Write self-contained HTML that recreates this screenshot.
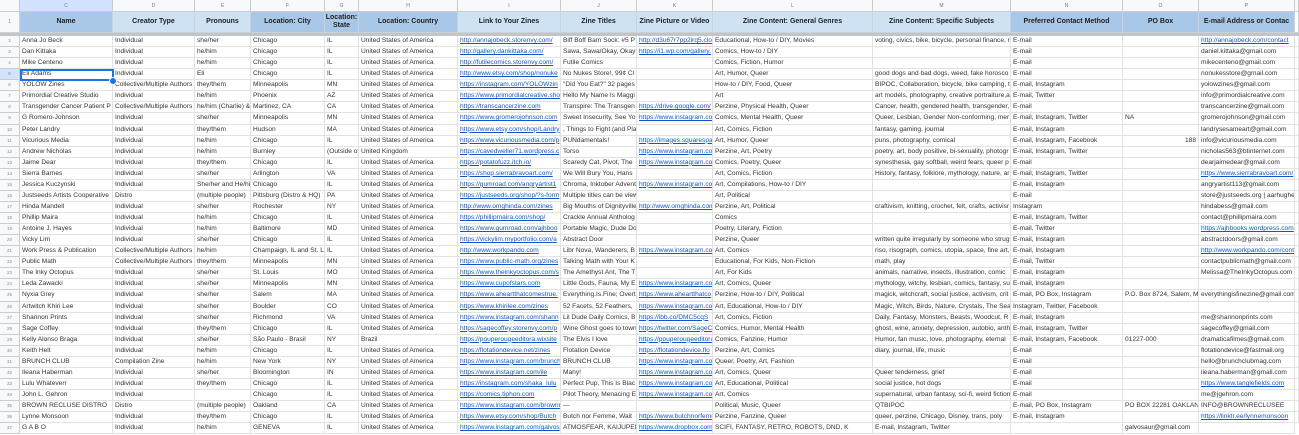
<!DOCTYPE html>
<html><head><meta charset="utf-8"><style>
*{margin:0;padding:0;box-sizing:border-box}
body{width:1299px;height:435px;overflow:hidden;background:#fff;font-family:"Liberation Sans",Arial,sans-serif;position:relative}
.g{display:grid;grid-template-columns:20px 93px 82px 56px 74px 34px 99px 103px 76px 76px 160px 138px 112px 76px 96px 4px}
.g>span{border-right:1px solid #e2e2e2;border-bottom:1px solid #e2e2e2;overflow:hidden;white-space:nowrap;padding-left:2px}
.lt{height:12px;background:#f8f9fa}
.lt>span{font-size:5px;color:#777;text-align:center;line-height:12px;border-color:#ccc;padding:0}
.hd{height:21px}
.hd>span{font-size:7px;font-weight:bold;color:#222;text-align:center;display:flex;align-items:center;justify-content:center;white-space:normal;line-height:8px;padding:0;border-color:#c8d3de}
.d{background:#a9c7e6}.li{background:#cfe2f3}
.sep{height:3px;background:#c4c4c4}
.r{height:11.07px}
.r>span{font-size:6.6px;color:#333;line-height:10.5px}
.r>span:first-child{font-size:4.5px;color:#888;text-align:center;padding:0;background:#f8f9fa;border-color:#ccc}
a{color:#1155cc;text-decoration:underline}
.rt{text-align:right;padding-right:2px}
#sel{position:absolute;left:20px;top:69px;width:94px;height:12px;border:2px solid #1a73e8}
#dot{position:absolute;left:109px;top:77px;width:8px;height:8px;border-radius:50%;background:#1a73e8;border:1px solid #fff}
</style></head><body>
<div class="g lt"><span style="background:#f8f9fa"></span><span style="background:#d3e3fd">C</span><span>D</span><span>E</span><span>F</span><span>G</span><span>H</span><span>I</span><span>J</span><span>K</span><span>L</span><span>M</span><span>N</span><span>O</span><span>P</span><span></span></div>
<div class="g hd"><span style="background:#f8f9fa;font-size:5px;font-weight:normal;color:#888">1</span><span class="d">Name</span><span class="li">Creator Type</span><span class="li">Pronouns</span><span class="d">Location: City</span><span class="d">Location: State</span><span class="d">Location: Country</span><span class="li">Link to Your Zines</span><span class="li">Zine Titles</span><span class="li">Zine Picture or Video</span><span class="li">Zine Content: General Genres</span><span class="li">Zine Content: Specific Subjects</span><span class="d">Preferred Contact Method</span><span class="d">PO Box</span><span class="d">E-mail Address or Contac</span><span></span></div>
<div class="sep"></div>
<div class="g r"><span>2</span><span>Anna Jo Beck</span><span>Individual</span><span>she/her</span><span>Chicago</span><span>IL</span><span>United States of America</span><span><a>http://annajobeck.storenvy.com/</a></span><span>Biff Boff Bam Sock: #5 P</span><span><a>http://d3u67r7pp2lrq5.clo</a></span><span>Educational, How-to / DIY, Movies</span><span>voting, civics, bike, bicycle, personal finance, r</span><span>E-mail</span><span></span><span><a>http://annajobeck.com/contact</a></span><span></span></div>
<div class="g r"><span>3</span><span>Dan Kittaka</span><span>Individual</span><span>he/him</span><span>Chicago</span><span>IL</span><span>United States of America</span><span><a>http://gallery.dankittaka.com/</a></span><span>Sawa, Sawa/Okay, Okay</span><span><a>https://i1.wp.com/gallery.</a></span><span>Comics, How-to / DIY</span><span></span><span>E-mail</span><span></span><span>daniel.kittaka@gmail.com</span><span></span></div>
<div class="g r"><span>4</span><span>Mike Centeno</span><span>Individual</span><span>he/him</span><span>Chicago</span><span>IL</span><span>United States of America</span><span><a>http://futilecomics.storenvy.com/</a></span><span>Futile Comics</span><span></span><span>Comics, Fiction, Humor</span><span></span><span>E-mail</span><span></span><span>mikecenteno@gmail.com</span><span></span></div>
<div class="g r"><span style="background:#d3e3fd">5</span><span>Eli Adams</span><span>Individual</span><span>Eli</span><span>Chicago</span><span>IL</span><span>United States of America</span><span><a>http://www.etsy.com/shop/nonuke</a></span><span>No Nukes Store!, 99¢ Cl</span><span></span><span>Art, Humor, Queer</span><span>good dogs and bad dogs, weed, fake horosco</span><span>E-mail</span><span></span><span>nonukesstore@gmail.com</span><span></span></div>
<div class="g r"><span>6</span><span>YOLOW Zines</span><span>Collective/Multiple Authors</span><span>they/them</span><span>Minneapolis</span><span>MN</span><span>United States of America</span><span><a>https://instagram.com/YOLOWzin</a></span><span>"Did You Eat?" 32 pages</span><span></span><span>How-to / DIY, Food, Queer</span><span>BIPOC, Collaboration, bicycle, bike camping, t</span><span>E-mail, Instagram</span><span></span><span>yolowzines@gmail.com</span><span></span></div>
<div class="g r"><span>7</span><span>Primordial Creative Studio</span><span>Individual</span><span>he/him</span><span>Phoenix</span><span>AZ</span><span>United States of America</span><span><a>https://www.primordialcreative.sho</a></span><span>Hello My Name Is Maggi</span><span></span><span>Art</span><span>art models, photography, creative portraiture,a</span><span>E-mail, Twitter</span><span></span><span>info@primordialcreative.com</span><span></span></div>
<div class="g r"><span>8</span><span>Transgender Cancer Patient P</span><span>Collective/Multiple Authors</span><span>he/him (Charlie) &amp;</span><span>Martinez, CA</span><span>CA</span><span>United States of America</span><span><a>https://transcancerzine.com</a></span><span>Transpire: The Transgen</span><span><a>https://drive.google.com/</a></span><span>Perzine, Physical Health, Queer</span><span>Cancer, health, gendered health, transgender,</span><span>E-mail</span><span></span><span>transcancerzine@gmail.com</span><span></span></div>
<div class="g r"><span>9</span><span>G Romero-Johnson</span><span>Individual</span><span>she/her</span><span>Minneapolis</span><span>MN</span><span>United States of America</span><span><a>https://www.gromerojohnson.com</a></span><span>Sweet Insecurity, See Yo</span><span><a>https://www.instagram.co</a></span><span>Comics, Mental Health, Queer</span><span>Queer, Lesbian, Gender Non-conforming, mer</span><span>E-mail, Instagram, Twitter</span><span>NA</span><span>gromerojohnson@gmail.com</span><span></span></div>
<div class="g r"><span>10</span><span>Peter Landry</span><span>Individual</span><span>they/them</span><span>Hudson</span><span>MA</span><span>United States of America</span><span><a>https://www.etsy.com/shop/Landry</a></span><span>, Things to Fight (and Pla</span><span></span><span>Art, Comics, Fiction</span><span>fantasy, gaming, journal</span><span>E-mail, Instagram</span><span></span><span>landrysesameart@gmail.com</span><span></span></div>
<div class="g r"><span>11</span><span>Vicurious Media</span><span>Individual</span><span>he/him</span><span>Chicago</span><span>IL</span><span>United States of America</span><span><a>https://www.vicuriousmedia.com/p</a></span><span>PUNdamentals!</span><span><a>https://images.squarespa</a></span><span>Art, Humor, Queer</span><span>puns, photography, comical</span><span>E-mail, Instagram, Facebook</span><span class="rt">188</span><span>info@vicuriousmedia.com</span><span></span></div>
<div class="g r"><span>12</span><span>Andrew Nicholas</span><span>Individual</span><span>he/him</span><span>Burnley</span><span>(Outside of</span><span>United Kingdom</span><span><a>https://cavedweller71.wordpress.c</a></span><span>Torso</span><span><a>https://www.instagram.co</a></span><span>Perzine, Art, Poetry</span><span>poetry, art, body positive, bi-sexuality, photogr</span><span>E-mail, Instagram, Twitter</span><span></span><span>nicholas563@btinternet.com</span><span></span></div>
<div class="g r"><span>13</span><span>Jaime Dear</span><span>Individual</span><span>they/them</span><span>Chicago</span><span>IL</span><span>United States of America</span><span><a>https://potatofuzz.itch.io/</a></span><span>Scaredy Cat, Pivot, The</span><span><a>https://www.instagram.co</a></span><span>Comics, Poetry, Queer</span><span>synesthesia, gay softball, weird fears, queer p</span><span>E-mail</span><span></span><span>dearjaimedear@gmail.com</span><span></span></div>
<div class="g r"><span>14</span><span>Sierra Barnes</span><span>Individual</span><span>she/her</span><span>Arlington</span><span>VA</span><span>United States of America</span><span><a>https://shop.sierrabravoart.com/</a></span><span>We Will Bury You, Hans</span><span></span><span>Art, Comics, Fiction</span><span>History, fantasy, folklore, mythology, nature, ar</span><span>E-mail, Instagram, Twitter</span><span></span><span><a>https://www.sierrabravoart.com/</a></span><span></span></div>
<div class="g r"><span>15</span><span>Jessica Kuczynski</span><span>Individual</span><span>She/her and He/hi</span><span>Chicago</span><span>IL</span><span>United States of America</span><span><a>https://gumroad.com/angryartist1</a></span><span>Chroma, Inktober Advent</span><span><a>https://www.instagram.co</a></span><span>Art, Compilations, How-to / DIY</span><span></span><span>E-mail, Instagram</span><span></span><span>angryartist113@gmail.com</span><span></span></div>
<div class="g r"><span>16</span><span>Justseeds Artists Cooperative</span><span>Distro</span><span>(multiple people)</span><span>Pittsburg (Distro &amp; HQ)</span><span>PA</span><span>United States of America</span><span><a>https://justseeds.org/shop/?s-form</a></span><span>Multiple titles can be view</span><span></span><span>Art, Political</span><span></span><span>E-mail</span><span></span><span>store@justseeds.org | aarhughe</span><span></span></div>
<div class="g r"><span>17</span><span>Hinda Mandell</span><span>Individual</span><span>she/her</span><span>Rochester</span><span>NY</span><span>United States of America</span><span><a>http://www.omghinda.com/zines</a></span><span>Big Mouths of Dignityville</span><span><a>http://www.omghinda.com</a></span><span>Perzine, Art, Political</span><span>craftivism, knitting, crochet, felt, crafts, activisr</span><span>Instagram</span><span></span><span>hindabess@gmail.com</span><span></span></div>
<div class="g r"><span>18</span><span>Phillip Maira</span><span>Individual</span><span>he/him</span><span>Chicago</span><span>IL</span><span>United States of America</span><span><a>https://phillipmaira.com/shop/</a></span><span>Crackle Annual Antholog</span><span></span><span>Comics</span><span></span><span>E-mail, Instagram, Twitter</span><span></span><span>contact@phillipmaira.com</span><span></span></div>
<div class="g r"><span>19</span><span>Antoine J. Hayes</span><span>Individual</span><span>he/him</span><span>Baltimore</span><span>MD</span><span>United States of America</span><span><a>https://www.gumroad.com/ajhboo</a></span><span>Portable Magic, Dude Do</span><span></span><span>Poetry, Literary, Fiction</span><span></span><span>E-mail, Twitter</span><span></span><span><a>https://ajhbooks.wordpress.com</a></span><span></span></div>
<div class="g r"><span>20</span><span>Vicky Lim</span><span>Individual</span><span>she/her</span><span>Chicago</span><span>IL</span><span>United States of America</span><span><a>https://vickylim.myportfolio.com/a</a></span><span>Abstract Door</span><span></span><span>Perzine, Queer</span><span>written quite irregularly by someone who strug</span><span>E-mail, Instagram</span><span></span><span>abstractdoors@gmail.com</span><span></span></div>
<div class="g r"><span>21</span><span>Work Press &amp; Publication</span><span>Collective/Multiple Authors</span><span>he/him</span><span>Champaign, IL and St. L</span><span>IL</span><span>United States of America</span><span><a>http://www.workpando.com</a></span><span>Libr Nova, Wanderers, B</span><span><a>https://www.instagram.co</a></span><span>Art, Comics</span><span>riso, risograph, comics, utopia, space, fine art,</span><span>E-mail, Instagram</span><span></span><span><a>http://www.workpando.com/cont</a></span><span></span></div>
<div class="g r"><span>22</span><span>Public Math</span><span>Collective/Multiple Authors</span><span>they/them</span><span>Minneapolis</span><span>MN</span><span>United States of America</span><span><a>https://www.public-math.org/zines</a></span><span>Talking Math with Your K</span><span></span><span>Educational, For Kids, Non-Fiction</span><span>math, play</span><span>E-mail, Twitter</span><span></span><span>contactpublicmath@gmail.com</span><span></span></div>
<div class="g r"><span>23</span><span>The Inky Octopus</span><span>Individual</span><span>she/her</span><span>St. Louis</span><span>MO</span><span>United States of America</span><span><a>https://www.theinkyoctopus.com/s</a></span><span>The Amethyst Ant, The T</span><span></span><span>Art, For Kids</span><span>animals, narrative, insects, illustration, comic</span><span>E-mail, Instagram</span><span></span><span>Melissa@TheInkyOctopus.com</span><span></span></div>
<div class="g r"><span>24</span><span>Leda Zawacki</span><span>Individual</span><span>she/her</span><span>Minneapolis</span><span>MN</span><span>United States of America</span><span><a>https://www.cupofstars.com</a></span><span>Little Gods, Fauna, My E</span><span><a>https://www.instagram.co</a></span><span>Art, Comics, Queer</span><span>mythology, witchy, lesbian, comics, fantasy, su</span><span>E-mail, Instagram</span><span></span><span></span><span></span></div>
<div class="g r"><span>25</span><span>Nyxia Grey</span><span>Individual</span><span>she/her</span><span>Salem</span><span>MA</span><span>United States of America</span><span><a>https://www.aheartthatcomestrue.</a></span><span>Everything.Is.Fine; Overt</span><span><a>https://www.aheartthatco</a></span><span>Perzine, How-to / DIY, Political</span><span>magick, witchcraft, social justice, activism, crit</span><span>E-mail, PO Box, Instagram</span><span>P.O. Box 8724, Salem, M</span><span>everythingisfinezine@gmail.com</span><span></span></div>
<div class="g r"><span>26</span><span>Artwitch Khiri Lee</span><span>Individual</span><span>she/her</span><span>Boulder</span><span>CO</span><span>United States of America</span><span><a>https://www.khirilee.com/zines</a></span><span>52 Facets, 52 Feathers,</span><span><a>https://www.instagram.co</a></span><span>Art, Educational, How-to / DIY</span><span>Magic, Witch, Birds, Nature, Crystals, The Sea</span><span>Instagram, Twitter, Facebook</span><span></span><span></span><span></span></div>
<div class="g r"><span>27</span><span>Shannon Prints</span><span>Individual</span><span>she/her</span><span>Richmond</span><span>VA</span><span>United States of America</span><span><a>https://www.instagram.com/shann</a></span><span>Lil Dude Daily Comics, B</span><span><a>https://ibb.co/DMC5cqS</a></span><span>Art, Comics, Fiction</span><span>Daily, Fantasy, Monsters, Beasts, Woodcut, R</span><span>E-mail, Instagram</span><span></span><span>me@shannonprints.com</span><span></span></div>
<div class="g r"><span>28</span><span>Sage Coffey</span><span>Individual</span><span>they/them</span><span>Chicago</span><span>IL</span><span>United States of America</span><span><a>https://sagecoffey.storenvy.com/p</a></span><span>Wine Ghost goes to town</span><span><a>https://twitter.com/SageC</a></span><span>Comics, Humor, Mental Health</span><span>ghost, wine, anxiety, depression, autobio, anth</span><span>E-mail, Instagram, Twitter</span><span></span><span>sagecoffey@gmail.com</span><span></span></div>
<div class="g r"><span>29</span><span>Kelly Alonso Braga</span><span>Individual</span><span>she/her</span><span>São Paulo - Brasil</span><span>NY</span><span>Brazil</span><span><a>https://pouperougeeditora.wixsite</a></span><span>The Elvis I love</span><span><a>https://pouperougeeditora</a></span><span>Comics, Fanzine, Humor</span><span>Humor, fan music, love, photography, eternal</span><span>E-mail, Instagram, Facebook</span><span>01227-000</span><span>dramaticafilmes@gmail.com</span><span></span></div>
<div class="g r"><span>30</span><span>Keith Helt</span><span>Individual</span><span>he/him</span><span>Chicago</span><span>IL</span><span>United States of America</span><span><a>https://flotationdevice.net/zines</a></span><span>Flotation Device</span><span><a>https://flotationdevice.flo</a></span><span>Perzine, Art, Comics</span><span>diary, journal, life, music</span><span>E-mail</span><span></span><span>flotationdevice@fastmail.org</span><span></span></div>
<div class="g r"><span>31</span><span>BRUNCH CLUB</span><span>Compilation Zine</span><span>he/him</span><span>New York</span><span>NY</span><span>United States of America</span><span><a>https://www.instagram.com/brunch</a></span><span>BRUNCH CLUB</span><span><a>https://www.instagram.co</a></span><span>Queer, Poetry, Art, Fashion</span><span></span><span>E-mail</span><span></span><span>hello@brunchclubmag.com</span><span></span></div>
<div class="g r"><span>32</span><span>Ileana Haberman</span><span>Individual</span><span>she/her</span><span>Bloomington</span><span>IN</span><span>United States of America</span><span><a>https://www.instagram.com/ile</a></span><span>Many!</span><span><a>https://www.instagram.co</a></span><span>Art, Comics, Queer</span><span>Queer tenderness, grief</span><span>E-mail</span><span></span><span>ileana.haberman@gmail.com</span><span></span></div>
<div class="g r"><span>33</span><span>Lulu Whateverr</span><span>Individual</span><span>they/them</span><span>Chicago</span><span>IL</span><span>United States of America</span><span><a>https://instagram.com/shaka_lulu</a></span><span>Perfect Pup, This Is Blac</span><span><a>https://www.instagram.co</a></span><span>Art, Educational, Political</span><span>social justice, hot dogs</span><span>E-mail</span><span></span><span><a>https://www.tanglefields.com</a></span><span></span></div>
<div class="g r"><span>34</span><span>John L. Gehron</span><span>Individual</span><span></span><span>Chicago</span><span>IL</span><span>United States of America</span><span><a>https://comics.tiphon.com</a></span><span>Pilot Theory, Menacing E</span><span><a>https://www.instagram.co</a></span><span>Art, Comics</span><span>supernatural, urban fantasy, sci-fi, weird fiction</span><span>E-mail</span><span></span><span>me@jgehron.com</span><span></span></div>
<div class="g r"><span>35</span><span>BROWN RECLUSE DISTRO</span><span>Distro</span><span>(multiple people)</span><span>Oakland</span><span>CA</span><span>United States of America</span><span><a>https://www.instagram.com/brownr</a></span><span>—</span><span></span><span>Political, Music, Queer</span><span>QTBIPOC</span><span>E-mail, PO Box, Instagram</span><span>PO BOX 22281 OAKLAN</span><span>INFO@BROWNRECLUSEE</span><span></span></div>
<div class="g r"><span>36</span><span>Lynne Monsoon</span><span>Individual</span><span>they/them</span><span>Chicago</span><span>IL</span><span>United States of America</span><span><a>https://www.etsy.com/shop/Butch</a></span><span>Butch nor Femme, Wait</span><span><a>https://www.butchnorfemm</a></span><span>Perzine, Fanzine, Queer</span><span>queer, perzine, Chicago, Disney, trans, poly</span><span>E-mail, Instagram</span><span></span><span><a>https://linktr.ee/lynnemonsoon</a></span><span></span></div>
<div class="g r"><span>37</span><span>G A B O</span><span>Individual</span><span>he/him</span><span>GENEVA</span><span>IL</span><span>United States of America</span><span><a>https://www.instagram.com/galvos</a></span><span>ATMOSFEAR, KAIJUPEI</span><span><a>https://www.dropbox.com</a></span><span>SCIFI, FANTASY, RETRO, ROBOTS, DND, K</span><span>E-mail, Instagram, Twitter</span><span></span><span>galvosaur@gmail.com</span><span></span></div>
<div id="sel"></div><div id="dot"></div>
</body></html>
